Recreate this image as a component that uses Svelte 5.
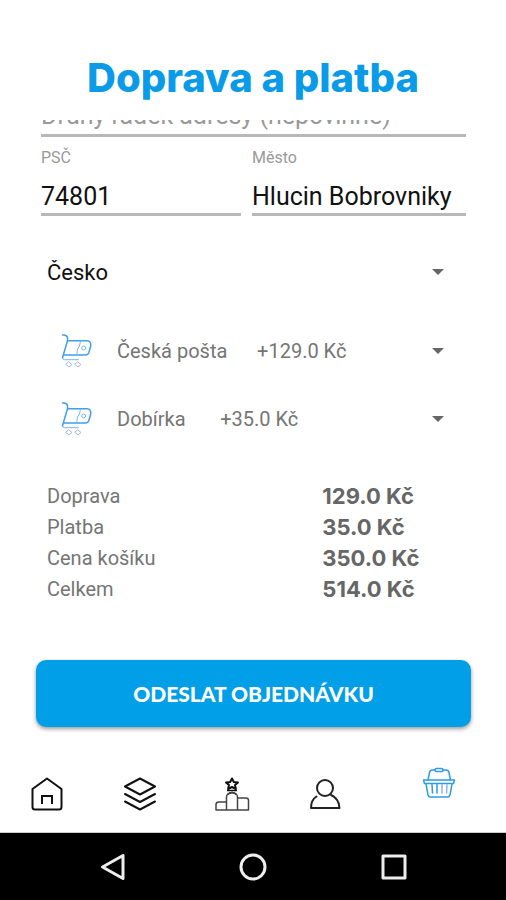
<script>
	let line2 = $state('');
	let zip = $state('74801');
	let city = $state('Hlucin Bobrovniky');
	let country = $state('Česko');

	const selects = [
		{ id: 'shipping', label: 'Doprava', text: 'Česká pošta', gap: 6, price: 129 },
		{ id: 'payment', label: 'Platba', text: 'Dobírka', gap: 7, price: 35 },
	];

	const basket = 350;

	const money = (value) => `${value.toFixed(1)} Kč`;

	const summary = [
		['Doprava', 129],
		['Platba', 35],
		['Cena košíku', basket],
		['Celkem', basket + 129 + 35],
	];
</script>

<div class="app">
	<header>
		<h1>Doprava a platba</h1>
	</header>

	<main>
		<form onsubmit={(e) => e.preventDefault()}>
			<div class="address">
				<input class="line2" aria-label="Druhý řádek adresy" placeholder="Druhý řádek adresy (nepovinné)" bind:value={line2} />
				<div class="field">
					<label for="zip">PSČ</label>
					<input id="zip" inputmode="numeric" bind:value={zip} />
				</div>
				<div class="field">
					<label for="city">Město</label>
					<input id="city" bind:value={city} />
				</div>
			</div>

			<div class="dropdown country">
				<select aria-label="Země" bind:value={country}>
					<option>Česko</option>
				</select>
				<span class="caret"></span>
			</div>

			{#each selects as item (item.id)}
				<div class="dropdown option">
					<svg class="cart" viewBox="0 0 32 34" width="32" height="34" fill="none" stroke="#3f9fe8" stroke-linecap="round" stroke-linejoin="round">
						<path d="M1.5 1H3q3.500.5 3.500 3v2.700h20q1.500 0 2.500 1.500t.8 3.500l-2 7q-.8 2.300-3 2.300H2.300L6.500 6.700M2.300 21l-.8 3" stroke-width="1.5" />
						<path d="M1.500 24q.3 1.700 2 1.700h14M19.500 7l-1 5-2 3-.8 6" stroke="#7fb4ea" />
						<circle cx="22.7" cy="14" r="2" stroke="#7fb4ea" />
						<path d="M8 28l3 2.500-3 2.500-3-2.500zM17 28l3 2.500-3 2.500-3-2.500z" stroke="#a3b9dc" />
					</svg>
					<select id={item.id} aria-label={item.label}>
						<option>{item.text + '\u00a0'.repeat(item.gap)}+{money(item.price)}</option>
					</select>
					<span class="caret"></span>
				</div>
			{/each}

			<dl>
				{#each summary as [name, value]}
					<dt>{name}</dt>
					<dd>{money(value)}</dd>
				{/each}
			</dl>

			<button class="submit">ODESLAT OBJEDNÁVKU</button>
		</form>
	</main>

	<nav>
		<a href="#home" aria-label="Domů">
			<svg viewBox="0 0 34 34" width="34" height="34" fill="none" stroke="#111" stroke-width="2" stroke-linejoin="round">
				<path d="M17 1.5L31.5 12V30q0 2.5-2.5 2.5H5Q2.5 32.5 2.5 30V12z" />
				<path d="M12 27V19h10v8" stroke-linejoin="miter" />
			</svg>
		</a>
		<a href="#categories" aria-label="Kategorie">
			<svg viewBox="0 0 34 34" width="34" height="34" fill="none" stroke="#111" stroke-width="2" stroke-linejoin="round" stroke-linecap="round">
				<path d="M17 1.5L32 9.5 17 17.5 2 9.5z" />
				<path d="M2 17l15 8 15-8M2 24.5l15 8 15-8" />
			</svg>
		</a>
		<a href="#rewards" aria-label="Odměny">
			<svg viewBox="0 0 36 34" width="36" height="34" fill="none" stroke="#444" stroke-width="1.5" stroke-linejoin="round">
				<path d="M18 1.5l1.8 3.500 4.200.4-3 2.700.9 3.900-3.900-2-3.900 2 .9-3.900-3-2.700 4.200-.4z" stroke="#111" stroke-width="2" />
				<path d="M13 13.500h10M13.500 17.500q4.500-4 9 0" stroke="#111" />
				<path d="M12.5 33V20q0-2 1.500-3 4-2.500 8 0 1.500 1 1.500 3V33" />
				<path d="M12.5 25H5q-3 0-3 2.500V33H34.500V23.500Q34.500 21 32 21h-8.500" />
			</svg>
		</a>
		<a href="#profile" aria-label="Profil">
			<svg viewBox="0 0 34 34" width="34" height="34" fill="none" stroke="#222" stroke-width="2" stroke-linecap="round">
				<circle cx="17" cy="11" r="8" />
				<path d="M8.5 19.5Q3 23 3 31H31.5Q31 21.5 23 18" stroke-linejoin="round" />
			</svg>
		</a>
		<a href="#basket" class="active" aria-label="Košík">
			<svg viewBox="0 0 34 32" width="34" height="32" fill="none" stroke="#2f9be6" stroke-width="1.5" stroke-linejoin="round" stroke-linecap="round">
				<path d="M6 13L7.5 5.500q.5-2.500 3-2.500H13M21 3h3q2.500 0 3 2.500L28.500 13" />
				<rect x="13" y="1.5" width="8" height="3" rx="1.5" />
				<path d="M1.5 13h31l-1 3.500H2.500z" />
				<path d="M4 17l2 11q.5 2 2.500 2h17q2 0 2.500-2l2-11" />
				<path d="M10 17.5l.5 8.500M15 17.500V26" />
				<path d="M20 17.5V26M25 17.500l-.5 8.500" stroke="#8fb4e8" />
			</svg>
		</a>
	</nav>

	<footer>
		<button aria-label="Zpět">
			<svg viewBox="0 0 28 28" width="28" height="28" fill="none" stroke="#eee" stroke-width="3" stroke-linejoin="round">
				<path d="M24 2.5v23L3.500 14z" />
			</svg>
		</button>
		<button aria-label="Domovská obrazovka">
			<svg viewBox="0 0 28 28" width="28" height="28" fill="none" stroke="#eee" stroke-width="3">
				<circle cx="14" cy="14" r="12" />
			</svg>
		</button>
		<button aria-label="Přehled">
			<svg viewBox="0 0 28 28" width="28" height="28" fill="none" stroke="#eee" stroke-width="3" stroke-linejoin="round">
				<rect x="3" y="3" width="22" height="22" />
			</svg>
		</button>
	</footer>
</div>

<style>
	:global(body) {
		margin: 0;
		background: #fff;
	}

	.app {
		display: flex;
		flex-direction: column;
		min-height: 100vh;
		font: 20px Roboto, sans-serif;
		color: #757575;
	}

	input, select, button {
		font: inherit;
		color: inherit;
		margin: 0;
		padding: 0;
		border: 0;
		background: none;
		outline: none;
		box-sizing: border-box;
	}

	header {
		padding: 54px 16px 18px;
	}

	h1 {
		margin: 0;
		font: 800 40px/48px Inter, sans-serif;
		color: #0a9be8;
		text-align: center;
	}

	main {
		overflow: hidden;
		padding: 0 35px 8px 36px;
	}

	/* second address line is scrolled halfway under the title */
	.address {
		display: grid;
		grid-template-columns: 200fr 214fr;
		column-gap: 11px;
		row-gap: 11px;
		margin: -20px 5px 0;
	}

	.field {
		display: grid;
		row-gap: 11px;
	}

	.field label {
		font-size: 16px;
		line-height: 20px;
		color: #999;
	}

	.address input {
		width: 100%;
		height: 37px;
		border-bottom: 3px solid #b8b8b8;
		font-size: 25px;
		color: #111;
	}

	.address .line2 {
		grid-column: span 2;
		padding-bottom: 4px;
	}

	.address input::placeholder {
		color: #999;
		opacity: 1;
	}

	.dropdown {
		display: grid;
		align-items: center;
		margin: 0 11px;
	}

	.dropdown > * {
		grid-area: 1 / 1;
	}

	.dropdown select {
		width: 100%;
		height: 100%;
		appearance: none;
	}

	.country {
		height: 48px;
		margin-top: 32px;
		margin-bottom: 21px;
		font-size: 22px;
		color: #111;
	}

	.option {
		height: 68px;
	}

	.option select {
		padding-left: 70px;
	}

	.cart {
		margin-left: 14px;
	}

	.caret {
		justify-self: end;
		width: 12px;
		height: 6px;
		margin-right: 16px;
		background: #666;
		clip-path: polygon(0 0, 100% 0, 50% 100%);
		pointer-events: none;
	}

	dl {
		display: grid;
		grid-template-columns: 2fr 1fr;
		margin: 28px 11px 55px;
		line-height: 31px;
	}

	dd {
		margin: 0;
		font-family: Inter, sans-serif;
		font-size: 22px;
		font-weight: 700;
		color: #666;
	}

	.submit {
		display: block;
		width: 100%;
		height: 67px;
		border-radius: 10px;
		background: #009fe8;
		box-shadow: 0 2px 4px rgba(0, 0, 0, .4);
		font: 900 21px Lato, sans-serif;
		color: #fff;
	}

	nav {
		display: grid;
		grid-template-columns: repeat(4, 11fr) 16fr;
		align-items: center;
		flex-grow: 1;
		padding: 20px 0 0 1px;
		border-bottom: 1px solid #ccc;
	}

	nav a {
		display: flex;
		justify-content: center;
	}

	nav .active {
		padding-bottom: 22px;
	}

	footer {
		display: grid;
		grid-template-columns: repeat(3, 1fr);
		padding: 0 42px 0 43px;
		height: 67px;
		background: #000;
	}

	footer button {
		display: flex;
		align-items: center;
		justify-content: center;
	}
</style>
